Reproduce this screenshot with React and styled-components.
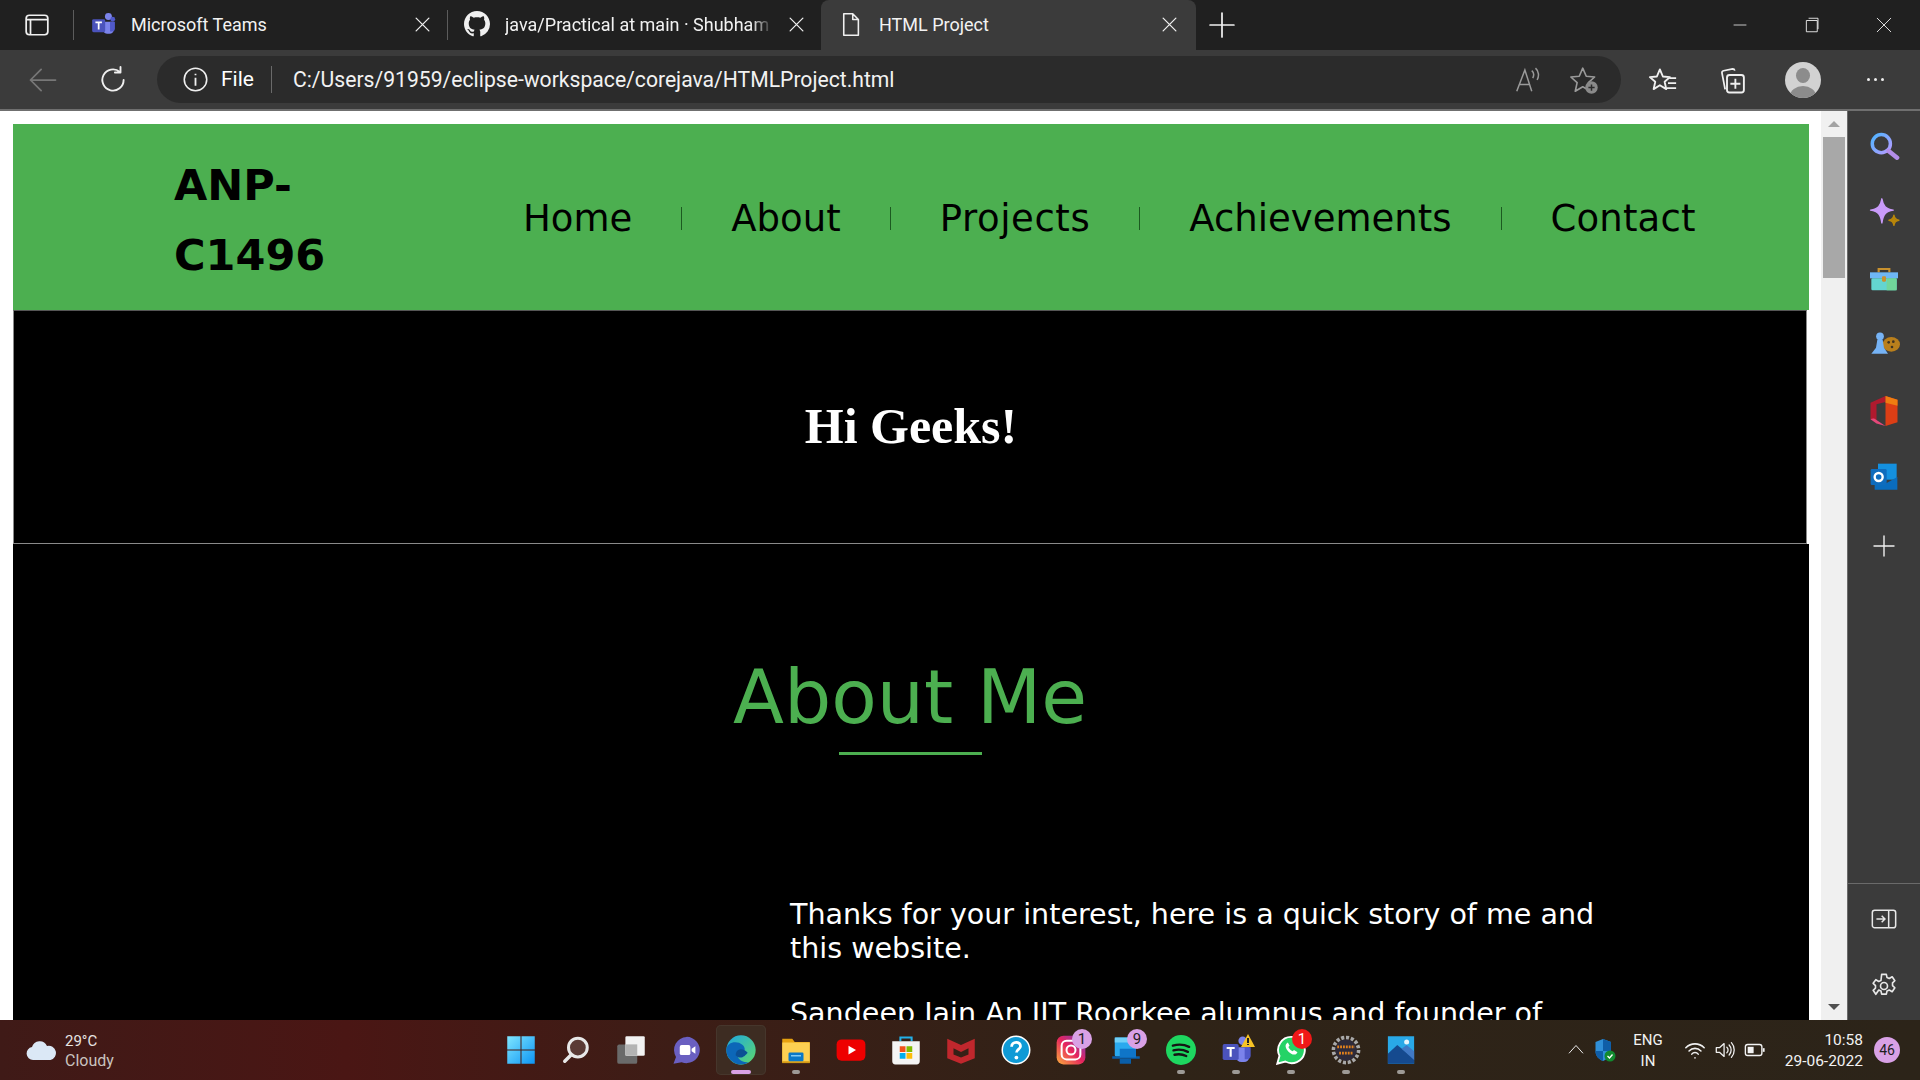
import React from 'react';
import styled, { createGlobalStyle } from 'styled-components';

const GlobalStyle = createGlobalStyle`
  html, body {
    margin: 0;
    padding: 0;
    height: 100%;
    overflow: hidden;
    background: #000;
  }
  * { box-sizing: border-box; }
`;

const Screen = styled.div`
  width: 1920px;
  height: 1080px;
  display: flex;
  flex-direction: column;
  overflow: hidden;
  font-family: Roboto, "Noto Sans", sans-serif;
  color: #fff;
`;

/* browser chrome */
const TabStrip = styled.div`
  height: 50px;
  flex: none;
  display: flex;
  align-items: stretch;
  background: #202020;
`;

const IconSlot = styled.div`
  width: ${p => p.$w || 30}px;
  flex: none;
  display: flex;
  align-items: center;
  justify-content: center;
`;

const TabGroupButton = styled(IconSlot)`
  width: 73px;
`;

const TabDivider = styled.div`
  width: 1px;
  height: 30px;
  align-self: center;
  background: #5c5c5c;
  flex: none;
`;

const Tab = styled.div`
  width: ${p => p.$w}px;
  flex: none;
  display: flex;
  align-items: center;
  padding: 0 ${p => (p.$active ? 18 : 16)}px 2px 16px;
  gap: 15px;
  background: ${p => (p.$active ? '#3b3b3b' : 'transparent')};
  border-radius: ${p => (p.$active ? '8px 8px 0 0' : '0')};
`;

const TabTitle = styled.span`
  flex: 1;
  min-width: 0;
  font-size: 18px;
  color: #f2f2f2;
  white-space: nowrap;
  overflow: hidden;
  mask-image: ${p => (p.$fade ? 'linear-gradient(90deg, #000 92%, transparent)' : 'none')};
`;

const NewTab = styled(IconSlot)`
  width: 52px;
`;

const WindowControls = styled.div`
  margin-left: auto;
  display: flex;
  align-items: center;
`;

const WindowButton = styled(IconSlot)`
  width: 72px;
`;

const ToolBar = styled.div`
  height: 61px;
  flex: none;
  display: flex;
  align-items: center;
  padding: 0 0 0 21px;
  background: #3b3b3b;
  border-bottom: 2px solid #6f6f6f;
`;

const NavButton = styled(IconSlot)`
  width: 44px;
  margin-right: ${p => p.$mr || 0}px;
`;

const AddressBar = styled.div`
  width: 1464px;
  height: 47px;
  flex: none;
  display: flex;
  align-items: center;
  padding: 0 22px 0 25px;
  border-radius: 24px;
  background: #2b2b2b;
  margin-right: 8px;
`;

const FileLabel = styled.span`
  font-size: 21px;
  margin-left: 12px;
  padding-right: 17px;
  border-right: 1px solid #6a6a6a;
  line-height: 27px;
`;

const Url = styled.span`
  font-size: 21.15px;
  margin-left: 21px;
  color: #f2f2f2;
  flex: 1;
`;

const ToolGroup = styled.div`
  display: flex;
  align-items: center;
`;

const Avatar = styled.div`
  width: 36px;
  height: 36px;
  border-radius: 50%;
  background: #d2d2d2;
  position: relative;
  overflow: hidden;

  &::before {
    content: '';
    position: absolute;
    left: 11px;
    top: 6px;
    width: 14px;
    height: 15px;
    border-radius: 50%;
    background: #8c8c8c;
  }

  &::after {
    content: '';
    position: absolute;
    left: 5px;
    top: 24px;
    width: 26px;
    height: 20px;
    border-radius: 50%;
    background: #8c8c8c;
  }
`;

const Dots = styled.div`
  display: flex;
  gap: 4px;
  span {
    width: 3px;
    height: 3px;
    background: #eee;
    border-radius: 50%;
  }
`;

/* middle area */
const Body = styled.div`
  flex: 1;
  min-height: 0;
  display: flex;
`;

const Viewport = styled.div`
  width: 1821px;
  flex: none;
  padding: 13px 12px 0 13px;
  overflow: hidden;
  background: #fff;
`;

const Scrollbar = styled.div`
  width: 26px;
  flex: none;
  display: flex;
  flex-direction: column;
  align-items: center;
  background: #f0f0f0;
  padding-top: 10px;
`;

const Arrow = styled.div`
  width: 0;
  height: 0;
  border-left: 6px solid transparent;
  border-right: 6px solid transparent;
  ${p => (p.$down
    ? 'border-top: 6px solid #505050; margin-top: auto; margin-bottom: 10px;'
    : 'border-bottom: 6px solid #a3a3a3;')}
`;

const Thumb = styled.div`
  width: 22px;
  height: 141px;
  margin-top: 10px;
  background: #a8a8a8;
`;

const Sidebar = styled.div`
  width: 73px;
  flex: none;
  display: flex;
  flex-direction: column;
  background: #3b3b3b;
  border-left: 1px solid #6a6a6a;
  padding-top: 3px;
`;

const SideItem = styled.div`
  height: ${p => p.$h || 66}px;
  flex: none;
  display: flex;
  align-items: center;
  justify-content: center;
`;

const SideFoot = styled.div`
  margin-top: auto;
  border-top: 1px solid #6a6a6a;
  padding-bottom: 1px;
`;

/* the page in the browser */
const Header = styled.header`
  height: 186px;
  display: flex;
  align-items: center;
  padding-left: 161px;
  background: #4caf50;
`;

const Logo = styled.div`
  width: 180px;
  padding-top: 5px;
  font-family: "Comic Sans MS", "DejaVu Sans", sans-serif;
  font-weight: 700;
  font-size: 43px;
  line-height: 70px;
  color: #000;
`;

const Menu = styled.nav`
  display: flex;
  align-items: center;
  margin-left: 120px;
  padding-top: 2px;
`;

const MenuItem = styled.a`
  padding: 0 49px;
  font-family: Verdana, "DejaVu Sans", sans-serif;
  font-size: 37px;
  line-height: 23px;
  height: 23px;
  color: #000;
  white-space: nowrap;
  letter-spacing: ${p => p.$track || 0}px;
  border-right: ${p => (p.$last ? 'none' : '1px solid #1c5a20')};
`;

const Hero = styled.section`
  height: 234px;
  margin-right: 2px;
  padding: 0 0 2px 2px;
  display: flex;
  align-items: center;
  justify-content: center;
  background: #000;
  border: 1px solid #8a8a8a;
  border-top-color: #555;
  font-family: "Liberation Serif", serif;
  font-weight: 700;
  font-size: 50px;
`;

const About = styled.section`
  background: #000;
  display: flex;
  flex-direction: column;
  align-items: center;
  padding: 110px 2px 40px 0;
  font-family: Verdana, "DejaVu Sans", sans-serif;
`;

const AboutTitle = styled.h1`
  margin: 0;
  font-weight: 400;
  font-size: 74.5px;
  line-height: 88px;
  color: #4caf50;
`;

const TitleRule = styled.div`
  width: 143px;
  height: 3px;
  margin-top: 10px;
  background: #4caf50;
`;

const Story = styled.div`
  width: 830px;
  margin: 142px 0 0 777px;
  align-self: flex-start;
  font-size: 28.55px;
  line-height: 34px;
  color: #fff;

  p {
    margin: 0 0 31px;
  }
`;

/* windows taskbar */
const Taskbar = styled.footer`
  height: 60px;
  flex: none;
  display: flex;
  align-items: center;
  background: linear-gradient(90deg, #3f1a17 0%, #4a1614 18%, #3d1d16 35%, #2f2317 60%, #2c2419 100%);
`;

const Weather = styled.div`
  width: 496px;
  flex: none;
  display: flex;
  align-items: center;
  padding-left: 25px;
  gap: 8px;
`;

const WeatherText = styled.div`
  padding-top: 2px;
  font-size: 15px;
  line-height: 20px;
  color: #e8e4e2;
  span {
    display: block;
    color: #c9c3bf;
    font-size: 16px;
  }
`;

const Apps = styled.div`
  display: flex;
  align-items: center;
`;

const AppSlot = styled.div`
  width: 50px;
  height: 50px;
  margin-right: 5px;
  position: relative;
  display: flex;
  align-items: center;
  justify-content: center;
  border-radius: 5px;
  ${p => (p.$active ? 'background: #3d2c22; box-shadow: inset 0 0 0 1px #46362c;' : '')}
`;

const RunDot = styled.div`
  position: absolute;
  left: 50%;
  bottom: 1px;
  transform: translateX(-50%);
  height: 4px;
  border-radius: 2px;
  width: ${p => (p.$active ? 20 : 8)}px;
  background: ${p => (p.$active ? '#d9a1e6' : '#9d9a96')};
`;

const Badge = styled.div`
  position: absolute;
  top: 4px;
  right: 4px;
  width: 20px;
  height: 20px;
  border-radius: 50%;
  background: ${p => (p.$alert ? '#f01818' : '#d9a1e6')};
  color: ${p => (p.$alert ? '#fff' : '#1e1e1e')};
  font-size: 15px;
  line-height: 20px;
  text-align: center;
`;

const WarnTriangle = styled.div`
  position: absolute;
  top: 9px;
  right: 6px;
  width: 0;
  height: 0;
  border-left: 7px solid transparent;
  border-right: 7px solid transparent;
  border-bottom: 13px solid #f7c325;

  &::after {
    content: '';
    position: absolute;
    left: -1px;
    top: 4px;
    width: 2px;
    height: 7px;
    background: linear-gradient(#222 70%, transparent 70%, transparent 80%, #222 80%);
  }
`;

const Tray = styled.div`
  margin-left: auto;
  display: flex;
  align-items: center;
  color: #f2f2f2;
`;

const TrayIcon = styled(IconSlot)`
  width: ${p => p.$w || 30}px;
`;

const Lang = styled.div`
  width: 50px;
  margin: 0 7px 0 2px;
  padding-top: 2px;
  text-align: center;
  font-size: 15px;
  line-height: 21px;
`;

const Clock = styled.div`
  width: 85px;
  margin-left: 8px;
  padding-top: 1px;
  text-align: right;
  font-size: 15.5px;
  line-height: 21px;
`;

const NotifyCount = styled.div`
  width: 26px;
  height: 26px;
  margin: 0 20px 0 11px;
  border-radius: 50%;
  background: #d9a1e6;
  color: #1e1e1e;
  font-size: 14px;
  line-height: 26px;
  text-align: center;
`;

/* drawings */
const Svg = ({ s = 24, children, ...rest }) => (
  <svg width={s} height={s} viewBox="0 0 24 24" fill="none" {...rest}>{children}</svg>
);

const Line = ({ s = 24, c = '#f0f0f0', w = 1.5, d }) => (
  <Svg s={s}><path d={d} stroke={c} strokeWidth={w} strokeLinecap="round" strokeLinejoin="round" /></Svg>
);

const CloseX = ({ s = 17 }) => <Line s={s} w={1.8} d="M3 3 L21 21 M21 3 L3 21" />;

const GithubMark = () => (
  <svg width="26" height="26" viewBox="0 0 16 16">
    <path fill="#f0f0f0" d="M8 0C3.58 0 0 3.58 0 8c0 3.54 2.29 6.53 5.47 7.59.4.07.55-.17.55-.38 0-.19-.01-.82-.01-1.49-2.01.37-2.53-.49-2.69-.94-.09-.23-.48-.94-.82-1.13-.28-.15-.68-.52-.01-.53.63-.01 1.08.58 1.23.82.72 1.21 1.87.87 2.33.66.07-.52.28-.87.51-1.07-1.78-.2-3.64-.89-3.64-3.95 0-.87.31-1.59.82-2.15-.08-.2-.36-1.02.08-2.12 0 0 .67-.21 2.2.82.64-.18 1.32-.27 2-.27s1.36.09 2 .27c1.53-1.04 2.2-.82 2.2-.82.44 1.1.16 1.92.08 2.12.51.56.82 1.27.82 2.15 0 3.07-1.87 3.75-3.65 3.95.29.25.54.73.54 1.48 0 1.07-.01 1.93-.01 2.2 0 .21.15.46.55.38A8.01 8.01 0 0 0 16 8c0-4.42-3.58-8-8-8z" />
  </svg>
);

const TeamsIcon = ({ s = 26 }) => (
  <Svg s={s}>
    <circle cx="17" cy="5" r="3.2" fill="#7b83eb" />
    <circle cx="21" cy="7.5" r="2.2" fill="#5059c9" />
    <path d="M12 10h10v7a4 4 0 0 1-4 4h-2a4 4 0 0 1-4-4z" fill="#7b83eb" />
    <path d="M18.5 10H23v6a3 3 0 0 1-3 3h-1.5z" fill="#5059c9" />
    <rect x="2" y="7.5" width="12" height="12" rx="1.3" fill="#4b53bc" />
    <path d="M5 10.5h6M8 10.5v6.5" stroke="#fff" strokeWidth="1.6" />
  </Svg>
);

const Magnifier = () => (
  <Svg s={32}>
    <defs>
      <linearGradient id="mg" x1="0" y1="0" x2="1" y2="1">
        <stop offset="0" stopColor="#4db4ff" />
        <stop offset="1" stopColor="#b79bff" />
      </linearGradient>
    </defs>
    <circle cx="10" cy="9.5" r="6.8" stroke="url(#mg)" strokeWidth="2.6" />
    <path d="M15.5 15l6.3 5" stroke="#b48dea" strokeWidth="3.4" strokeLinecap="round" />
  </Svg>
);

const Sparkle = () => (
  <Svg s={34}>
    <path d="M10.5 2c.8 5 2.6 7.2 8 8-5.4.8-7.2 3-8 9-.8-6-2.6-8.2-8-9 5.4-.8 7.2-3 8-8z" fill="#c99bfa" stroke="#c99bfa" strokeLinejoin="round" />
    <path d="M19 13.5c.3 2.4 1.2 3.3 3.5 3.6-2.3.3-3.2 1.2-3.5 3.6-.3-2.4-1.2-3.3-3.5-3.6 2.3-.3 3.2-1.2 3.5-3.6z" fill="#b8860b" stroke="#b8860b" strokeLinejoin="round" />
  </Svg>
);

const Toolbox = () => (
  <Svg s={32}>
    <path d="M8 7V4.5h8V7" stroke="#c8912e" strokeWidth="1.6" />
    <rect x="1.5" y="7" width="21" height="4.5" fill="#6fb7f5" />
    <rect x="2.5" y="11.5" width="19" height="9" rx="1" fill="#63d5d0" />
    <rect x="14" y="11.5" width="7.5" height="9" fill="#71d69a" />
    <rect x="10.5" y="10" width="3" height="4" rx=".8" fill="#c8912e" />
  </Svg>
);

const ChessCookie = () => (
  <Svg s={32}>
    <ellipse cx="17.5" cy="11.5" rx="6.5" ry="5.5" fill="#b97f1c" />
    <circle cx="15.5" cy="10" r="1" fill="#3f3320" />
    <circle cx="19" cy="9.5" r="1" fill="#3f3320" />
    <circle cx="18" cy="13.5" r="1" fill="#3f3320" />
    <circle cx="9" cy="5.5" r="2.9" fill="#76b3f5" />
    <path d="M7 8h4l1 6 3 4.500H2.500L6 14z" fill="#76b3f5" />
  </Svg>
);

const OfficeIcon = () => (
  <Svg s={36}>
    <path d="M13 2l8 2.500v15L13 22z" fill="#dc3e15" />
    <path d="M13 2L3 6.500v11l4 1.500V7.500L13 6z" fill="#b01a2e" />
    <path d="M3 17.500c1.500-1 3-.6 4 .5l6 4-6-1.600z" fill="#e5487a" />
    <path d="M13 2l8 2.500v4l-8-2z" fill="#ef7d11" />
  </Svg>
);

const OutlookIcon = () => (
  <Svg s={32}>
    <rect x="7.5" y="2" width="14" height="12" fill="#1490df" />
    <path d="M5 13l8 4 9-5v9.500H5z" fill="#0a6cbd" />
    <rect x="2" y="6" width="12" height="12" rx="1" fill="#0f6cbd" />
    <circle cx="8" cy="12" r="3" stroke="#fff" strokeWidth="1.8" />
  </Svg>
);

const PanelIcon = () => (
  <Svg s={28}>
    <rect x="2" y="4.5" width="20" height="15" rx="2" stroke="#e8e8e8" strokeWidth="1.3" />
    <path d="M16 4.500v15M5.500 12h7M10 9.200l2.800 2.800-2.800 2.800" stroke="#e8e8e8" strokeWidth="1.3" />
  </Svg>
);

const GearIcon = () => (
  <Svg s={28}>
    <circle cx="12" cy="12" r="3" stroke="#e8e8e8" strokeWidth="1.4" />
    <path stroke="#e8e8e8" strokeWidth="1.4" strokeLinejoin="round" d="M10 2.500h4l.6 2.800 1.900.8 2.500-1.500 2.300 3.400-2 1.900v2.200l2 1.900-2.300 3.400-2.500-1.500-1.900.8-.6 2.800h-4l-.6-2.800-1.900-.8L5 19.600l-2.300-3.400 2-1.900v-2.200l-2-1.900L5 7.100l2.500 1.500 1.900-.8z" transform="translate(0 -.5)" />
  </Svg>
);

const WinLogo = () => (
  <Svg s={30}>
    <defs>
      <linearGradient id="wl" x1="0" y1="0" x2="1" y2="1">
        <stop offset="0" stopColor="#7fe6ff" />
        <stop offset="1" stopColor="#0d95f5" />
      </linearGradient>
    </defs>
    <path d="M1 1h10.600v10.600H1zM12.400 1H23v10.600H12.400zM1 12.400h10.600V23H1zM12.400 12.400H23V23H12.400z" fill="url(#wl)" />
  </Svg>
);

const SearchApp = () => (
  <Svg s={30}>
    <circle cx="13.5" cy="10" r="7.5" fill="#5a3a35" stroke="#e8e8e8" strokeWidth="2.4" />
    <path d="M8 16l-5 5" stroke="#e8e8e8" strokeWidth="2.8" strokeLinecap="round" />
  </Svg>
);

const TaskView = () => (
  <Svg s={30}>
    <rect x="1" y="7.5" width="16" height="15.5" rx="1.5" fill="#6a6a6a" />
    <rect x="7.5" y="1" width="15.5" height="15.5" rx="1" fill="#f2f2f2" />
    <rect x="7.5" y="7.5" width="9.5" height="9" fill="#b3b3b3" />
  </Svg>
);

const ChatApp = () => (
  <Svg s={30}>
    <path d="M12.500 1.500a10.500 10.500 0 1 1-4 20.200L2 23l2-5.500A10.500 10.500 0 0 1 12.500 1.500z" fill="#6a5fc1" />
    <rect x="7" y="8" width="8.5" height="8" rx="1.5" fill="#fff" />
    <path d="M16.500 11l3-2v6l-3-2z" fill="#fff" />
  </Svg>
);

const EdgeApp = () => (
  <Svg s={32}>
    <defs>
      <linearGradient id="eg" x1="0" y1="0" x2="1" y2="1">
        <stop offset="0" stopColor="#1ea7e1" />
        <stop offset="1" stopColor="#5ed96b" />
      </linearGradient>
    </defs>
    <circle cx="12" cy="12" r="11" fill="url(#eg)" />
    <path d="M1 12c0-6 8-7.500 12-4 3 2.600 2 6-1 6-2 0-3.500 2-1.500 4.500 1.500 2 4.500 3 7.500 2.500A11 11 0 0 1 1 12z" fill="#0c67b8" />
    <path d="M8 16c0-3 2-4.500 4-4.500s3.500 1 5 2.500c-1.500 2-5.500 6-9 2z" fill="#0b4f94" />
  </Svg>
);

const FolderApp = () => (
  <Svg s={30}>
    <path d="M1 3h8l2 2.500h12V22H1z" fill="#e6a10f" />
    <rect x="1" y="6" width="22" height="16" fill="#fcd052" />
    <rect x="1" y="21" width="22" height="1.5" fill="#d59a14" />
    <rect x="6" y="14" width="12" height="7" rx="1" fill="#0a78c8" />
    <rect x="8" y="16" width="8" height="1.2" fill="#7fc9f4" />
  </Svg>
);

const YoutubeApp = () => (
  <Svg s={30}>
    <rect x="0.5" y="3.5" width="23" height="17" rx="4" fill="#ee0000" />
    <path d="M10 8.500l6 3.500-6 3.500z" fill="#fff" />
  </Svg>
);

const StoreApp = () => (
  <Svg s={30}>
    <path d="M7.500 5V2h9v3" stroke="#22b0e8" strokeWidth="1.6" />
    <path d="M1 5h22v16a2.500 2.500 0 0 1-2.500 2.500h-17A2.500 2.500 0 0 1 1 21z" fill="#f4f4f4" />
    <rect x="7" y="9" width="4.6" height="4.6" fill="#f1511b" />
    <rect x="12.4" y="9" width="4.6" height="4.6" fill="#80bb00" />
    <rect x="7" y="14.4" width="4.6" height="4.6" fill="#00adef" />
    <rect x="12.4" y="14.4" width="4.6" height="4.6" fill="#fbbc09" />
  </Svg>
);

const McafeeApp = () => (
  <Svg s={30}>
    <path d="M1 3l11 5 11-5v15.500L12 23 1 18.500zM6 10.500v5l6 2.500 6-2.500v-5l-6 3z" fill="#c0272d" fillRule="evenodd" />
  </Svg>
);

const HelpApp = () => (
  <Svg s={30}>
    <circle cx="12" cy="12" r="11" fill="#0f9ad6" stroke="#fff" strokeWidth="1.2" />
    <path d="M8.500 9.300c0-2.200 1.600-3.500 3.600-3.500 2.100 0 3.500 1.300 3.500 3.100 0 2.500-3.200 2.700-3.200 5.100" stroke="#fff" strokeWidth="2.2" />
    <circle cx="12.3" cy="18" r="1.5" fill="#fff" />
  </Svg>
);

const InstaApp = () => (
  <Svg s={30}>
    <defs>
      <linearGradient id="ig" x1="0" y1="1" x2="1" y2="0">
        <stop offset="0" stopColor="#fbb03b" />
        <stop offset=".5" stopColor="#e6245e" />
        <stop offset="1" stopColor="#6a3fc4" />
      </linearGradient>
    </defs>
    <rect x="0.5" y="0.5" width="23" height="23" rx="5.5" fill="url(#ig)" />
    <rect x="4.5" y="4.5" width="15" height="15" rx="4" stroke="#fff" strokeWidth="1.6" />
    <circle cx="12" cy="12" r="3.6" stroke="#fff" strokeWidth="1.6" />
  </Svg>
);

const MailApp = () => (
  <Svg s={30}>
    <path d="M1 17h22v2H1z" fill="#0a5ea8" />
    <rect x="3" y="2" width="17" height="15" rx="1" fill="#2aa9ee" />
    <rect x="3" y="2" width="17" height="4" fill="#6fd0f8" />
    <rect x="7" y="11" width="13" height="7" fill="#0f75c8" />
    <rect x="7" y="19" width="9" height="4" fill="#0a5ea8" />
  </Svg>
);

const SpotifyApp = () => (
  <Svg s={30}>
    <circle cx="12" cy="12" r="12" fill="#1ed760" />
    <path d="M5.500 8.500c4.500-1.300 9-1 13 1M6 12.300c4-1 7.800-.7 11.500 1.200M6.800 15.800c3.300-.8 6.400-.5 9.400 1" stroke="#151515" strokeWidth="1.9" strokeLinecap="round" />
  </Svg>
);

const WhatsappApp = () => (
  <Svg s={30}>
    <path d="M12.500 1.500a10.500 10.500 0 1 1-5 19.700L1 23l1.800-6.300A10.500 10.500 0 0 1 12.500 1.500z" fill="#25d366" stroke="#fff" strokeWidth="1.5" />
    <path d="M8.500 6.800c-1.500 1.500-.8 4 1.300 6.300 2.300 2.400 5 3.300 6.600 1.800l.8-1.200-2.800-1.700-1.100 1c-1.500-.5-2.800-1.900-3.400-3.400l1-1.100L9.500 6z" fill="#fff" />
  </Svg>
);

const EclipseApp = () => (
  <Svg s={30}>
    <circle cx="12" cy="12" r="10" stroke="#a8a8a8" strokeWidth="3" strokeDasharray="2.500 1.400" />
    <circle cx="12" cy="12" r="8.5" fill="#2d2a3a" />
    <path d="M5 9.500h14M6.500 14.500h11" stroke="#e0801c" strokeWidth="2.2" strokeDasharray="1.500 .8" />
  </Svg>
);

const PhotosApp = () => (
  <Svg s={30}>
    <rect x="1.5" y="1" width="21" height="22" fill="#29a9e8" />
    <path d="M1.500 23v-8l7.500-7 13.500 11v4z" fill="#154a8f" />
    <path d="M12.500 11l4-3 6 5v7z" fill="#4079c5" />
    <circle cx="16.5" cy="5.5" r="2" fill="#e6f5fd" />
  </Svg>
);

const CloudIcon = () => (
  <svg width="32" height="24" viewBox="0 0 32 24">
    <path d="M8 22a6.500 6.500 0 0 1-1-12.900A8 8 0 0 1 22 8a6 6 0 0 1 3.500 14z" fill="#dbe8f6" />
  </svg>
);

const ShieldIcon = () => (
  <Svg s={24}>
    <path d="M9 1l8 3v9c0 5-3.500 8-8 10-4.500-2-7.500-5-7.500-10V4z" fill="#2f8fd8" />
    <path d="M9 1l8 3v9H9zM1.500 13H9v10c-4.500-2-7.500-5-7.500-10z" fill="#0f5ea8" />
    <circle cx="16" cy="18" r="5.5" fill="#118a2f" />
    <path d="M13.500 18l2 2 3-3.500" stroke="#fff" strokeWidth="1.3" />
  </Svg>
);

const WifiIcon = () => (
  <Line s={22} w={1.7} d="M2 9.500a14 14 0 0 1 20 0M5.500 13a9 9 0 0 1 13 0M8.500 16.500a4.500 4.500 0 0 1 7 0M12 20.500v.1" />
);

const SpeakerIcon = () => (
  <Line s={22} w={1.4} d="M2.500 9.500h3.500l5-4.500v14l-5-4.500H2.500zM14 9a4 4 0 0 1 0 6M16.500 6.500a8 8 0 0 1 0 11M19 4a12 12 0 0 1 0 16" />
);

const BatteryIcon = () => (
  <Svg s={22}>
    <rect x="1.5" y="6" width="18" height="12" rx="2.5" stroke="#f2f2f2" strokeWidth="1.5" />
    <rect x="4" y="8.5" width="6.5" height="7" fill="#f2f2f2" />
    <rect x="20.5" y="10" width="2" height="4" fill="#f2f2f2" />
  </Svg>
);

const StarAdd = () => (
  <Svg s={30}>
    <path d="M11 2.500l2.800 6.500 6.700.6-5 4.500 1.500 6.800L11 17.400 5 21l1.500-6.900-5-4.500 6.700-.6z" stroke="#9a9a9a" strokeWidth="1.3" strokeLinejoin="round" />
    <circle cx="18" cy="18" r="5" fill="#8a8a8a" />
    <path d="M15.500 18h5M18 15.500v5" stroke="#2b2b2b" strokeWidth="1.2" />
  </Svg>
);

const ReadAloud = () => (
  <Svg s={30}>
    <path d="M3 21L9.500 4 15 21M5.500 15.500h8M15 4.500c1.800 1.500 1.800 4 .8 6M18 2.500c2.800 2.500 3 6.500 1.300 9.500" stroke="#9a9a9a" strokeWidth="1.2" />
  </Svg>
);

const Favorites = () => (
  <Svg s={30}>
    <path d="M9.500 3.500l2.400 5.700 5.600.5-4.200 3.700 1.300 5.900-5.100-3.100-5 3.100 1.300-5.900L1.500 9.700l5.600-.5z" stroke="#f0f0f0" strokeWidth="1.5" strokeLinejoin="round" />
    <path d="M17 10.500h5.500M16 14.500h6.500M15 18.500h7.500" stroke="#f0f0f0" strokeWidth="1.5" />
  </Svg>
);

const Collections = () => (
  <Svg s={30}>
    <path d="M6.500 19.500L4 6.500c-.2-1 .3-1.700 1.200-1.900l7.300-1.500c1 0 1.500.5 1.700 1.400" stroke="#f0f0f0" strokeWidth="1.4" />
    <rect x="8" y="8" width="13.5" height="14" rx="2" stroke="#f0f0f0" strokeWidth="1.5" />
    <path d="M14.700 11v8M10.700 15h8" stroke="#f0f0f0" strokeWidth="1.5" />
  </Svg>
);

const apps = [
  { key: 'win', node: <WinLogo /> },
  { key: 'search', node: <SearchApp /> },
  { key: 'view', node: <TaskView /> },
  { key: 'chat', node: <ChatApp /> },
  { key: 'edge', node: <EdgeApp />, active: true, run: true },
  { key: 'files', node: <FolderApp />, run: true },
  { key: 'yt', node: <YoutubeApp /> },
  { key: 'store', node: <StoreApp /> },
  { key: 'mcafee', node: <McafeeApp /> },
  { key: 'help', node: <HelpApp /> },
  { key: 'insta', node: <InstaApp />, badge: '1' },
  { key: 'mail', node: <MailApp />, badge: '9' },
  { key: 'spotify', node: <SpotifyApp />, run: true },
  { key: 'teams', node: <TeamsIcon s={32} />, run: true, warn: true },
  { key: 'wa', node: <WhatsappApp />, run: true, badge: '1', red: true },
  { key: 'eclipse', node: <EclipseApp />, run: true },
  { key: 'photos', node: <PhotosApp />, run: true },
];

const menu = [
  { label: 'Home' },
  { label: 'About' },
  { label: 'Projects', track: 0.6 },
  { label: 'Achievements' },
  { label: 'Contact', track: 0.15 },
];

export default function App() {
  return (
    <Screen>
      <GlobalStyle />
      <TabStrip>
        <TabGroupButton>
          <Svg s={26}>
            <rect x="2" y="3" width="20" height="18" rx="3" stroke="#f0f0f0" strokeWidth="1.6" />
            <path d="M2 7h20M6 7v14" stroke="#f0f0f0" strokeWidth="1.6" />
          </Svg>
        </TabGroupButton>
        <TabDivider />
        <Tab $w={373}>
          <TeamsIcon />
          <TabTitle>Microsoft Teams</TabTitle>
          <CloseX />
        </Tab>
        <TabDivider />
        <Tab $w={373}>
          <GithubMark />
          <TabTitle $fade>java/Practical at main · Shubham Kumar</TabTitle>
          <CloseX />
        </Tab>
        <Tab $w={375} $active>
          <Line s={27} w={1.4} d="M6 2.500h8l5 5v14H6zM14 2.500v5h5" />
          <TabTitle>HTML Project</TabTitle>
          <CloseX />
        </Tab>
        <NewTab><Line s={26} w={1.6} d="M12 1v22M1 12h22" /></NewTab>
        <WindowControls>
          <WindowButton><Line s={16} w={1.2} d="M3 12h18" /></WindowButton>
          <WindowButton><Line s={18} w={1.2} d="M5 6h14v15H5zM8 3h12v14" /></WindowButton>
          <WindowButton><Line s={18} w={1.2} d="M3 3l18 18M21 3L3 21" /></WindowButton>
        </WindowControls>
      </TabStrip>

      <ToolBar>
        <NavButton $mr={26}><Line s={30} c="#777" w={1.4} d="M22 12H2M10.500 3.500L2 12l8.500 8.500" /></NavButton>
        <NavButton $mr={22}><Line s={30} w={1.5} d="M20.500 12a8.500 8.500 0 1 1-3-6.500M18 1.500v4.500h-4.500" /></NavButton>
        <AddressBar>
          <Svg s={27}>
            <circle cx="12" cy="12" r="10" stroke="#efefef" strokeWidth="1.4" />
            <path d="M12 10.500v7M12 6.800v1.400" stroke="#efefef" strokeWidth="1.6" />
          </Svg>
          <FileLabel>File</FileLabel>
          <Url>C:/Users/91959/eclipse-workspace/corejava/HTMLProject.html</Url>
          <ToolGroup>
            <IconSlot $w={82}><ReadAloud /></IconSlot>
            <IconSlot $w={30}><StarAdd /></IconSlot>
          </ToolGroup>
        </AddressBar>
        <ToolGroup>
          <IconSlot $w={68}><Favorites /></IconSlot>
          <IconSlot $w={70}><Collections /></IconSlot>
          <IconSlot $w={72}><Avatar /></IconSlot>
          <IconSlot $w={72}><Dots><span /><span /><span /></Dots></IconSlot>
        </ToolGroup>
      </ToolBar>

      <Body>
        <Viewport>
          <Header>
            <Logo>ANP-C1496</Logo>
            <Menu>
              {menu.map((m, i) => (
                <MenuItem key={m.label} $track={m.track} $last={i === menu.length - 1}>{m.label}</MenuItem>
              ))}
            </Menu>
          </Header>
          <Hero>Hi Geeks!</Hero>
          <About>
            <AboutTitle>About Me</AboutTitle>
            <TitleRule />
            <Story>
              <p>Thanks for your interest, here is a quick story of me and this website.</p>
              <p>Sandeep Jain An IIT Roorkee alumnus and founder of</p>
            </Story>
          </About>
        </Viewport>
        <Scrollbar>
          <Arrow />
          <Thumb />
          <Arrow $down />
        </Scrollbar>
        <Sidebar>
          <SideItem><Magnifier /></SideItem>
          <SideItem><Sparkle /></SideItem>
          <SideItem><Toolbox /></SideItem>
          <SideItem><ChessCookie /></SideItem>
          <SideItem><OfficeIcon /></SideItem>
          <SideItem><OutlookIcon /></SideItem>
          <SideItem $h={72}><Line s={24} w={1.4} d="M12 2v20M2 12h20" /></SideItem>
          <SideFoot>
            <SideItem $h={69}><PanelIcon /></SideItem>
            <SideItem $h={66}><GearIcon /></SideItem>
          </SideFoot>
        </Sidebar>
      </Body>

      <Taskbar>
        <Weather>
          <CloudIcon />
          <WeatherText>
            29°C
            <span>Cloudy</span>
          </WeatherText>
        </Weather>
        <Apps>
          {apps.map(a => (
            <AppSlot key={a.key} $active={a.active}>
              {a.node}
              {a.run && <RunDot $active={a.active} />}
              {a.badge && <Badge $alert={a.red}>{a.badge}</Badge>}
              {a.warn && <WarnTriangle />}
            </AppSlot>
          ))}
        </Apps>
        <Tray>
          <TrayIcon $w={30}><Line s={18} w={1.3} d="M3 16l9-10 9 10" /></TrayIcon>
          <TrayIcon $w={30}><ShieldIcon /></TrayIcon>
          <Lang>ENG<br />IN</Lang>
          <TrayIcon $w={30}><WifiIcon /></TrayIcon>
          <TrayIcon $w={30}><SpeakerIcon /></TrayIcon>
          <TrayIcon $w={30}><BatteryIcon /></TrayIcon>
          <Clock>10:58<br />29-06-2022</Clock>
          <NotifyCount>46</NotifyCount>
        </Tray>
      </Taskbar>
    </Screen>
  );
}
